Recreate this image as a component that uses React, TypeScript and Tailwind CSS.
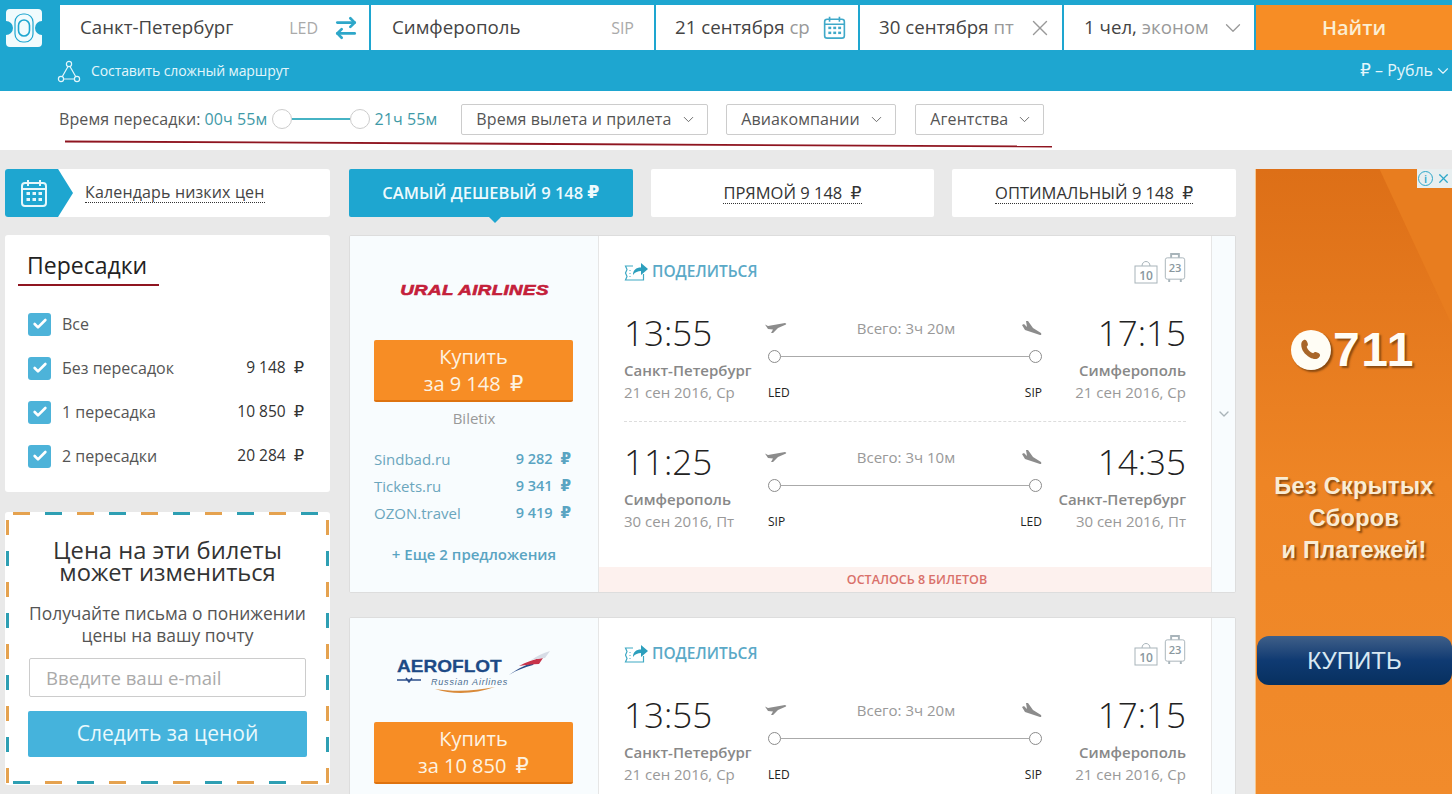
import React from 'react';
import { ArrowRightLeft, Check, ChevronDown, X } from 'lucide-react';

const CalendarIcon = ({ className, stroke }: { className: string; stroke: string }) => (
    <svg viewBox="0 0 28 30" className={className} fill="none" stroke={stroke} strokeWidth="2">
        <rect x="2" y="5" width="24" height="23" rx="3" />
        <path d="M2 11h24M8 2v6M20 2v6" />
        <g fill={stroke} stroke="none">
            <rect x="6.5" y="14" width="3.5" height="3" />
            <rect x="12.5" y="14" width="3.5" height="3" />
            <rect x="18.5" y="14" width="3.5" height="3" />
            <rect x="6.5" y="20" width="3.5" height="3" />
            <rect x="12.5" y="20" width="3.5" height="3" />
            <rect x="18.5" y="20" width="3.5" height="3" />
        </g>
    </svg>
);

const ShareIcon = () => (
    <svg viewBox="0 0 24 20" className="w-[24px] h-[20px]" fill="none">
        <path d="M9 4H1.500l1.500 3.500L1.500 11l1.500 3.500L1.500 18h18v-6" stroke="#3fa9c4" strokeWidth="1.2" />
        <path d="M6 8v1M6 11v1M6 14v1" stroke="#3fa9c4" />
        <path d="M9 13c0-5 3-7.500 8-7.500V1l7 6-7 6V9c-3 0-6 1-8 4z" fill="#2c9fbd" />
    </svg>
);

const BagIcon = () => (
    <svg viewBox="0 0 24 24" className="w-[24px] h-[24px]" fill="none" stroke="#a8b4ba" strokeWidth="1">
        <path d="M8 6c0-6 8-6 8 0" />
        <rect x="1" y="6" width="22" height="17" />
        <text x="12" y="20" textAnchor="middle" fontSize="12" fontWeight="600" fill="#8a979e" stroke="none" fontFamily="'Open Sans', sans-serif">10</text>
    </svg>
);

const SuitcaseIcon = () => (
    <svg viewBox="0 0 22 32" className="w-[22px] h-[31px]" fill="none" stroke="#a8b4ba" strokeWidth="1">
        <path d="M7 5V1h8v4" strokeWidth="2" />
        <rect x="1" y="5" width="20" height="22" rx="2" />
        <path d="M5 27v3M17 27v3" strokeWidth="2" />
        <text x="11" y="20" textAnchor="middle" fontSize="11.5" fontWeight="600" fill="#8a979e" stroke="none" fontFamily="'Open Sans', sans-serif">23</text>
    </svg>
);

const PlaneUp = () => (
    <svg viewBox="0 0 22 10" className="w-[22px] h-[10px] mt-[-1px] ml-[-3px]" fill="#8c8c8c">
        <path d="M0 1.500 3 3 20 0q2 .5 1 1.500L13 5l-5 5H6l2-3.500L3 6z" />
    </svg>
);

const PlaneDown = () => (
    <svg viewBox="0 0 20 15" className="w-[20px] h-[15px] mt-[1px]" fill="#8c8c8c">
        <path d="M0 4l2-1 3 3-1-6h2l5 7 8 5q1 2-1 2L3 9z" />
    </svg>
);

const Ruble = () => <span className="ml-[4px] font-['DejaVu_Sans',sans-serif] text-[1.05em]">₽</span>;

const filterRows = [
    { label: 'Все', price: '' },
    { label: 'Без пересадок', price: '9 148' },
    { label: '1 пересадка', price: '10 850' },
    { label: '2 пересадки', price: '20 284' },
];

const FlightRow = ({ seg, last }: { seg: any; last?: boolean }) => (
    <div className={`grid grid-cols-[140px_282px_140px] h-[129px] ${last ? '' : 'border-b border-dashed border-[#dddddd]'}`}>
        <div>
            <div className="text-[35px] leading-[40px] mt-[20px] font-light text-[#222222]">{seg.dep}</div>
            <div className="text-[15px] leading-[20px] mt-[7px] font-semibold text-[#888888] whitespace-nowrap">{seg.from}</div>
            <div className="text-[15px] leading-[20px] mt-[2px] text-[#999999] whitespace-nowrap">{seg.depDate}</div>
        </div>
        <div className="pt-[24px] px-[4px]">
            <div className="grid grid-cols-[22px_1fr_20px] items-center h-[20px]">
                <PlaneUp />
                <span className="text-[15px] text-[#999999] text-center">{seg.total}</span>
                <PlaneDown />
            </div>
            <div className="flex items-center mt-[13px]">
                <span className="w-[13px] h-[13px] rounded-full border border-[#8c8c8c] bg-white shrink-0" />
                <span className="flex-1 h-px bg-[#aaaaaa]" />
                <span className="w-[13px] h-[13px] rounded-full border border-[#8c8c8c] bg-white shrink-0" />
            </div>
            <div className="flex justify-between mt-[22px] text-[12px] leading-[16px] text-[#222222]">
                <span>{seg.a}</span>
                <span>{seg.b}</span>
            </div>
        </div>
        <div className="text-right">
            <div className="text-[35px] leading-[40px] mt-[20px] font-light text-[#222222]">{seg.arr}</div>
            <div className="text-[15px] leading-[20px] mt-[7px] font-semibold text-[#888888] whitespace-nowrap">{seg.to}</div>
            <div className="text-[15px] leading-[20px] mt-[2px] text-[#999999] whitespace-nowrap">{seg.arrDate}</div>
        </div>
    </div>
);

const there = { dep: '13:55', arr: '17:15', from: 'Санкт-Петербург', to: 'Симферополь', depDate: '21 сен 2016, Ср', arrDate: '21 сен 2016, Ср', total: 'Всего: 3ч 20м', a: 'LED', b: 'SIP' };
const back = { dep: '11:25', arr: '14:35', from: 'Симферополь', to: 'Санкт-Петербург', depDate: '30 сен 2016, Пт', arrDate: '30 сен 2016, Пт', total: 'Всего: 3ч 10м', a: 'SIP', b: 'LED' };

// second card runs off the bottom of the page, so only the first card is full
const TicketCard = ({ logo, price, full }: { logo: React.ReactNode; price: string; full?: boolean }) => (
    <div className="flex h-[358px] shrink-0 bg-white border border-[#dddddd] rounded-[2px] overflow-hidden">
        <div className="w-[249px] shrink-0 bg-[#f8fcfe] border-r border-[#e6e6e6] px-[24px]">
            <div className="h-[104px] flex items-center justify-center">{logo}</div>
            <button className="w-[199px] h-[62px] bg-[#f78d25] border-b-2 border-[#de7310] rounded-[2px] text-[#fdf3e2] text-[20px] leading-[27px]">
                Купить
                <br />
                за {price} <Ruble />
            </button>
            {full && (
                <>
                    <div className="text-center text-[15px] leading-[20px] text-[#999999] mt-[6px]">Biletix</div>
                    <div className="mt-[21px] space-y-[7px] text-[15px] leading-[20px]">
                        <div className="flex justify-between pr-[3px]">
                            <span className="text-[#6ba6bd]">Sindbad.ru</span>
                            <span className="font-semibold text-[14.500px] text-[#5aa4c2]">9 282 <Ruble /></span>
                        </div>
                        <div className="flex justify-between pr-[3px]">
                            <span className="text-[#6ba6bd]">Tickets.ru</span>
                            <span className="font-semibold text-[14.500px] text-[#5aa4c2]">9 341 <Ruble /></span>
                        </div>
                        <div className="flex justify-between pr-[3px]">
                            <span className="text-[#6ba6bd]">OZON.travel</span>
                            <span className="font-semibold text-[14.500px] text-[#5aa4c2]">9 419 <Ruble /></span>
                        </div>
                    </div>
                    <div className="text-center text-[15px] leading-[20px] font-semibold text-[#5aa4c2] mt-[21px]">+ Еще 2 предложения</div>
                </>
            )}
        </div>
        <div className="flex-1 flex flex-col">
            <div className="px-[25px] flex-1">
                <div className="flex justify-between h-[57px] pt-[16px]">
                    <div className="flex items-center gap-[4px] h-[40px]">
                        <ShareIcon />
                        <span className="text-[15.500px] font-semibold text-[#5aa9c7]">ПОДЕЛИТЬСЯ</span>
                    </div>
                    <div className="flex items-end gap-[6px] h-[32px]">
                        <BagIcon />
                        <SuitcaseIcon />
                    </div>
                </div>
                <FlightRow seg={there} />
                {full && <FlightRow seg={back} last />}
            </div>
            {full && (
                <div className="h-[25px] bg-[#fdf1ee] pl-[24px] text-center text-[12.500px] leading-[25px] font-semibold text-[#d9706a]">ОСТАЛОСЬ 8 БИЛЕТОВ</div>
            )}
        </div>
        <div className="w-[24px] shrink-0 bg-[#f8fcfe] border-l border-[#e6e6e6] flex items-center justify-center">
            {full && <ChevronDown className="w-[16px] h-[16px] text-[#aab4b9]" />}
        </div>
    </div>
);

const SelectButton = ({ label, className }: { label: string; className: string }) => (
    <button className={`h-[31px] border border-[#cccccc] rounded-[2px] flex items-center justify-between pl-[14px] pr-[10px] text-[#555555] ${className}`}>
        {label}
        <ChevronDown className="w-[17px] h-[17px]" strokeWidth={1.2} />
    </button>
);

export default function App() {
    return (
        <div className="relative h-[794px] overflow-hidden bg-[#e9e9e9] font-['Open_Sans',sans-serif]">
            <header className="h-[91px] bg-[#1ea6d0] pt-[5px]">
                <div className="flex h-[45px]">
                    <div className="w-[60px] shrink-0 pl-[5px] pt-[4px]">
                        <svg viewBox="0 0 38 38" className="w-[38px] h-[38px]">
                            <path d="M5 0h28a4 4 0 0 1 4 4v8a7 7 0 0 0 0 14v8a4 4 0 0 1-4 4H5a4 4 0 0 1-4-4v-8a7 7 0 0 0 0-14V4a4 4 0 0 1 4-4z" fill="#f1fbfd" />
                            <rect x="10" y="5" width="18" height="28" rx="8" fill="none" stroke="#1ea6d0" strokeWidth="1.2" />
                            <rect x="13.500" y="11" width="11" height="16" rx="5.500" fill="none" stroke="#1ea6d0" strokeWidth="1.6" />
                        </svg>
                    </div>
                    <div className="flex-1 flex gap-[2px]">
                        <div className="w-[309px] bg-white flex items-center pl-[20px] pr-[10px] text-[18.700px] text-[#444444]">
                            <span className="flex-1">Санкт-Петербург</span>
                            <span className="text-[16px] text-[#aaaaaa] mr-[15px]">LED</span>
                            <ArrowRightLeft className="w-[26px] h-[26px] text-[#2ea7c9]" strokeWidth={2.5} />
                        </div>
                        <div className="w-[283px] bg-white flex items-center pl-[21px] pr-[20px] text-[18.700px] text-[#444444]">
                            <span className="flex-1">Симферополь</span>
                            <span className="text-[16px] text-[#aaaaaa]">SIP</span>
                        </div>
                        <div className="w-[202px] bg-white flex items-center pl-[19px] pr-[12px] text-[18.700px] text-[#444444]">
                            <span className="flex-1 whitespace-nowrap">21 сентября <span className="text-[#999999]">ср</span></span>
                            <CalendarIcon className="w-[23px] h-[25px]" stroke="#3fa9c9" />
                        </div>
                        <div className="w-[202px] bg-white flex items-center pl-[19px] pr-[9px] text-[18.700px] text-[#444444]">
                            <span className="flex-1 whitespace-nowrap">30 сентября <span className="text-[#999999]">пт</span></span>
                            <X className="w-[26px] h-[26px] text-[#999999]" strokeWidth={1.3} />
                        </div>
                        <div className="w-[190px] bg-white flex items-center pl-[20px] pr-[8px] text-[18.700px] text-[#444444]">
                            <span className="flex-1 whitespace-nowrap">1 чел, <span className="text-[#999999]">эконом</span></span>
                            <ChevronDown className="w-[26px] h-[26px] text-[#999999]" strokeWidth={1.2} />
                        </div>
                        <button className="flex-1 bg-[#f78d25] text-[#fbeed2] text-[20px] font-semibold">Найти</button>
                    </div>
                </div>
                <div className="flex items-center justify-between h-[41px] pl-[57px]">
                    <div className="flex items-center gap-[10px] text-[14px] text-[#e4f6fb]">
                        <svg viewBox="0 0 24 24" className="w-[24px] h-[24px]" fill="none" stroke="#e4f6fb" strokeWidth="1.2">
                            <circle cx="12" cy="5" r="2.600" />
                            <circle cx="4" cy="20" r="2.600" />
                            <circle cx="20" cy="20" r="2.600" />
                            <path d="M11 7.500 5.200 17.800M13 7.500l5.800 10.300M6.600 20h10.800" />
                        </svg>
                        <span className="tracking-[-0.1px]">Составить сложный маршрут</span>
                    </div>
                    <div className="flex items-center text-[16px] text-[#e4f6fb]">
                        <span><span className="font-['DejaVu_Sans',sans-serif] text-[17px]">₽</span> – Рубль</span>
                        <ChevronDown className="w-[18px] h-[18px] ml-[1px]" strokeWidth={1.5} />
                    </div>
                </div>
            </header>

            <div className="h-[59px] bg-white flex items-center pl-[59px] pb-[3px] text-[16px] tracking-[0.1px] text-[#555555]">
                <span>Время пересадки:</span>
                <span className="ml-[4px] text-[#3f9aa8]">00ч 55м</span>
                <div className="flex items-center w-[98px] ml-[5px]">
                    <span className="w-[20px] h-[20px] rounded-full border border-[#cccccc] bg-white shrink-0" />
                    <span className="flex-1 h-[2px] bg-[#46b3c4]" />
                    <span className="w-[20px] h-[20px] rounded-full border border-[#cccccc] bg-white shrink-0" />
                </div>
                <span className="ml-[4px] text-[#3f9aa8]">21ч 55м</span>
                <SelectButton label="Время вылета и прилета" className="ml-[24px] w-[247px]" />
                <SelectButton label="Авиакомпании" className="ml-[18px] w-[170px]" />
                <SelectButton label="Агентства" className="ml-[19px] w-[129px]" />
            </div>

            {/* hand drawn underline on top of the filter bar */}
            <svg className="absolute left-0 top-[138px] w-[1060px] h-[12px]" viewBox="0 0 1060 12" fill="none">
                <path d="M65 3.500 L1052 8.500" stroke="#8f1520" strokeWidth="1.8" />
            </svg>

            <div className="flex pt-[19px] pl-[5px] gap-[19px]">
                <aside className="w-[325px] shrink-0 flex flex-col">
                    <div className="h-[48px] bg-white rounded-[3px] flex items-center overflow-hidden">
                        <div className="w-[68px] h-[48px] bg-[#1ea6d0] [clip-path:polygon(0_0,78%_0,100%_50%,78%_100%,0_100%)] flex items-center pl-[15px]">
                            <CalendarIcon className="w-[28px] h-[30px]" stroke="#e6f7fb" />
                        </div>
                        <span className="ml-[12px] text-[16px] tracking-[0.15px] text-[#444444] leading-[19px] border-b border-dotted border-[#333333]">Календарь низких цен</span>
                    </div>

                    <div className="mt-[18px] h-[257px] bg-white rounded-[3px] relative">
                        <h3 className="pl-[22px] pt-[13px] text-[23px] leading-[34px] text-[#222222]">Пересадки</h3>
                        <div className="absolute left-[13px] top-[49px] w-[141px] h-[2px] bg-[#8f1520]" />
                        <div className="mt-[30px] pl-[23px] pr-[26px]">
                            {filterRows.map((row) => (
                                <div key={row.label} className="flex items-center h-[24px] mb-[20px] text-[16px] text-[#555555]">
                                    <span className="w-[23px] h-[23px] bg-[#4db3d9] rounded-[3px] flex items-center justify-center shrink-0">
                                        <Check className="w-[16px] h-[16px] text-white" strokeWidth={4} />
                                    </span>
                                    <span className="ml-[11px] flex-1">{row.label}</span>
                                    {row.price && <span className="text-[15.500px] text-[#333333]">{row.price} <Ruble /></span>}
                                </div>
                            ))}
                        </div>
                    </div>

                    <div className="relative mt-[20px] h-[273px] bg-white rounded-[3px] px-[22px] text-center">
                        <div className="absolute left-[8px] right-[2px] top-0 h-[3px] bg-[repeating-linear-gradient(90deg,#e5a24f_0_17px,transparent_17px_32px,#2e9fb3_32px_49px,transparent_49px_64px)]" />
                        <div className="absolute left-[8px] right-[2px] bottom-[1px] h-[3px] bg-[repeating-linear-gradient(90deg,#2e9fb3_0_17px,transparent_17px_32px,#e5a24f_32px_49px,transparent_49px_64px)]" />
                        <div className="absolute left-[1px] top-[8px] bottom-[2px] w-[3px] bg-[repeating-linear-gradient(180deg,#e5a24f_0_15px,transparent_15px_31px,#2e9fb3_31px_46px,transparent_46px_62px)]" />
                        <div className="absolute right-[1px] top-[8px] bottom-[2px] w-[3px] bg-[repeating-linear-gradient(180deg,#e5a24f_0_15px,transparent_15px_31px,#2e9fb3_31px_46px,transparent_46px_62px)]" />
                        <h4 className="pt-[27px] text-[23.700px] leading-[22px] text-[#333333]">Цена на эти билеты может измениться</h4>
                        <p className="mt-[19px] text-[17.400px] leading-[22px] text-[#555555]">Получайте письма о понижении цены на вашу почту</p>
                        <div className="mt-[12px] mx-[2px] h-[39px] border border-[#cccccc] rounded-[2px] text-left pl-[16px] text-[18.600px] leading-[37px] text-[#aaaaaa]">Введите ваш e-mail</div>
                        <button className="mt-[14px] w-[279px] h-[46px] bg-[#45b3dc] rounded-[2px] text-[21px] font-medium text-[#e9f9fc]">Следить за ценой</button>
                    </div>
                </aside>

                <main className="w-[887px] shrink-0 flex flex-col">
                    <div className="flex gap-[18px] h-[48px] shrink-0">
                        <div className="relative w-[284px] bg-[#1ea6d0] rounded-[2px] flex items-center justify-center text-[16.500px] font-semibold text-[#eefafd]">
                            САМЫЙ ДЕШЕВЫЙ 9 148 <Ruble />
                            <span className="absolute left-[140px] top-[48px] w-0 h-0 border-x-[6px] border-x-transparent border-t-[6px] border-t-[#1ea6d0]" />
                        </div>
                        <div className="w-[284px] bg-white rounded-[2px] flex items-center justify-center text-[16.500px] text-[#333333]">
                            <span className="border-b border-dotted border-[#333333] leading-[19px]">ПРЯМОЙ 9 148 <Ruble /></span>
                        </div>
                        <div className="w-[284px] bg-white rounded-[2px] flex items-center justify-center text-[16.500px] text-[#333333]">
                            <span className="border-b border-dotted border-[#333333] leading-[19px]">ОПТИМАЛЬНЫЙ 9 148 <Ruble /></span>
                        </div>
                    </div>
                    <div className="mt-[18px] flex flex-col gap-[24px]">
                        <TicketCard
                            price="9 148"
                            full
                            logo={
                                <span className="mt-[4px] text-[15px] font-black italic tracking-[0.3px] text-[#c4203a] [-webkit-text-stroke:0.6px_#c4203a] [font-family:'Liberation_Sans',sans-serif] scale-x-125 whitespace-nowrap">URAL AIRLINES</span>
                            }
                        />
                        <TicketCard
                            price="10 850"
                            logo={
                                <div className="relative w-[154px] h-[46px] mt-[8px]">
                                    <span className="absolute left-0 top-[6px] text-[17px] font-bold leading-[20px] text-[#1d4a86] [-webkit-text-stroke:0.3px_#1d4a86] [font-family:'Liberation_Sans',sans-serif] scale-x-[1.12] origin-left">AEROFLOT</span>
                                    <span className="absolute left-[34px] top-[25px] text-[9px] italic tracking-[0.8px] text-[#4a6c90] [font-family:'Liberation_Sans',sans-serif]">Russian Airlines</span>
                                    <svg viewBox="0 0 154 46" className="absolute inset-0 w-[154px] h-[46px]" fill="none">
                                        <path d="M112 24c10-7 18-11 26-13l-2 3c-8 2-16 5-24 10z" fill="#2b4d8a" />
                                        <path d="M122 15c7-4 15-7 24-8l-4 6c-7 0-13 1-20 2z" fill="#c8334a" />
                                        <path d="M134 9c6-4 12-7 19-9l-5 7c-5 0-9 1-14 2z" fill="#d7dce6" />
                                        <path d="M38 38c18 6 40 5 60-2-20 4-40 5-60 2z" fill="#d98a3a" />
                                        <path d="M0 29h24M9 27l3 4 3-4" stroke="#2b4d8a" strokeWidth="1.500" />
                                    </svg>
                                </div>
                            }
                        />
                    </div>
                </main>

                <aside className="relative w-[197px] h-[625px] shrink-0 border-l border-[#f6c78f] bg-linear-to-b from-[#dd6f17] via-[#ee8525] to-[#f18b2b] text-center overflow-hidden">
                    <div className="absolute inset-0 bg-[#e87d1f] [clip-path:polygon(63%_0,100%_0,100%_25%)]" />
                    <div className="absolute right-0 top-0 w-[35px] h-[19px] bg-[#e8eff0] flex items-center justify-center gap-[3px] text-[#2ea7c9]">
                        <span className="w-[15px] h-[15px] rounded-full border border-[#2ea7c9] text-[11px] leading-[13px] font-semibold">i</span>
                        <X className="w-[15px] h-[15px]" strokeWidth={2} />
                    </div>
                    <div className="relative pt-[155px] flex items-center justify-center gap-[2px] pr-[2px] [font-family:'Liberation_Sans',sans-serif] text-[#fffdf5] [text-shadow:2px_2px_2px_#8a4a10]">
                        <span className="w-[40px] h-[40px] rounded-full bg-[#fffdf5] flex items-center justify-center shadow-[2px_2px_2px_#8a4a10]">
                            <svg viewBox="0 0 24 24" className="w-[26px] h-[26px]" fill="#a8662a">
                                <path d="M5 3c2-1 3 0 4 3 .4 1.300 0 2-1 3 1 3 3 5 6 6 1-1 1.700-1.400 3-1 3 1 4 2 3 4-2 3-5 3-9 1-5-3-8-7-8-12 0-2 .6-3 2-4z" />
                            </svg>
                        </span>
                        <span className="text-[48px] leading-[52px] font-bold tracking-[1.500px]">711</span>
                    </div>
                    <div className="relative mt-[94px] text-[23.500px] leading-[32px] font-bold tracking-[0.3px] text-[#f9ecd4] [font-family:'Liberation_Sans',sans-serif] [text-shadow:2px_2px_2px_#8a4a10]">
                        Без Скрытых
                        <br />
                        Сборов
                        <br />
                        и Платежей!
                    </div>
                    <div className="relative mt-[70px] ml-[1px] h-[49px] rounded-[12px] bg-linear-to-b from-[#3f5f88] via-[#0f3a72] to-[#07305f] flex items-center justify-center text-[24px] text-[#d9e8f2] [font-family:'Liberation_Sans',sans-serif]">
                        КУПИТЬ
                    </div>
                </aside>
            </div>
        </div>
    );
}
